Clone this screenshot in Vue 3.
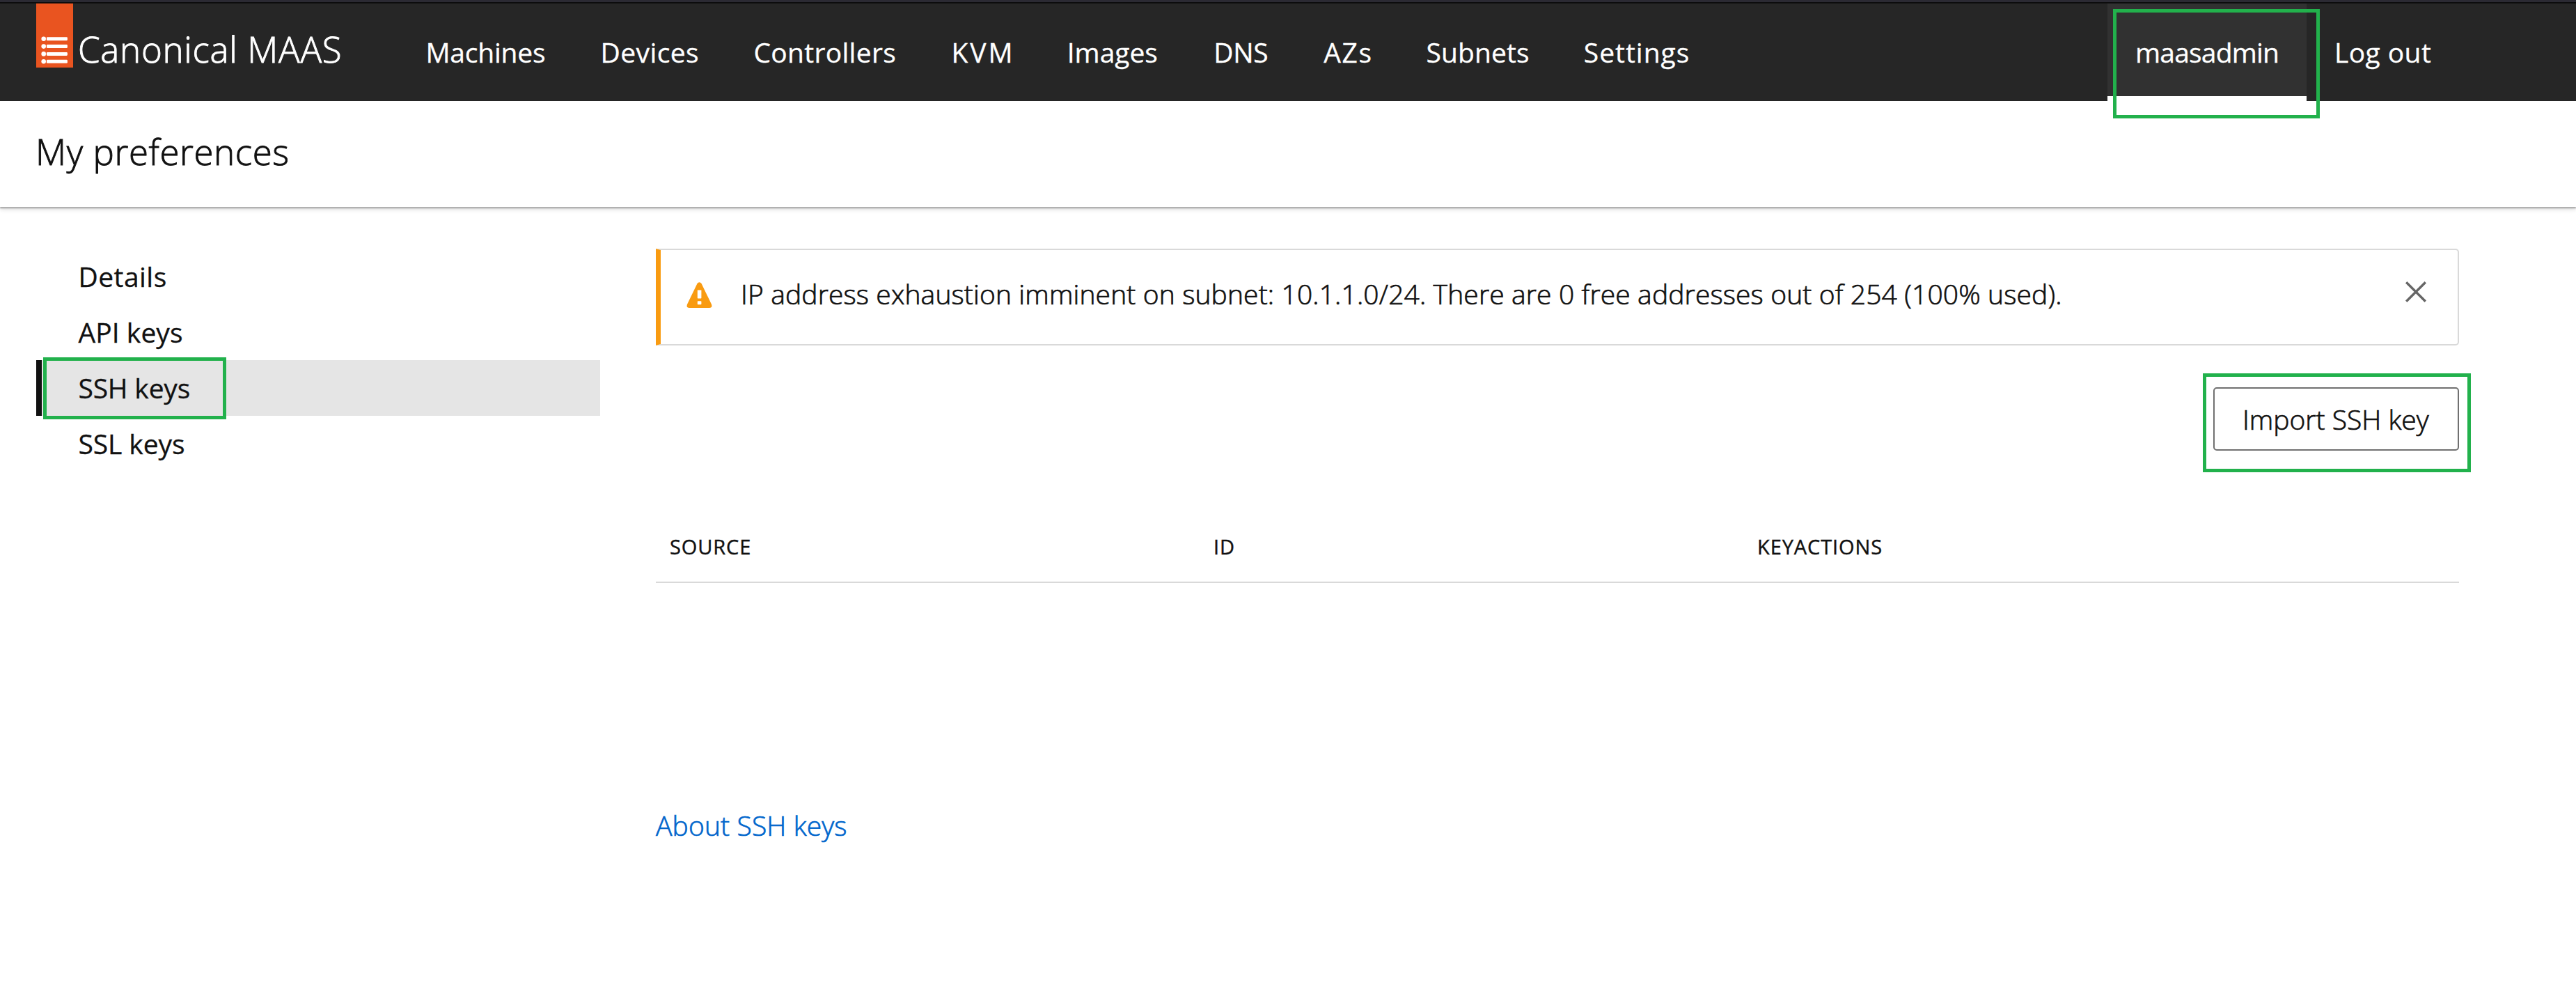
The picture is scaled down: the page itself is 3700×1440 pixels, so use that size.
<script setup>
const navLinks = [
  { label: 'Machines', width: 251.2, spacing: -0.2 },
  { label: 'Devices', width: 219.8, spacing: 0.4 },
  { label: 'Controllers', width: 284.1, spacing: 0.3 },
  { label: 'KVM', width: 166.3, spacing: 3 },
  { label: 'Images', width: 210.5, spacing: -0.05 },
  { label: 'DNS', width: 158, spacing: -0.3 },
  { label: 'AZs', width: 147.2, spacing: 1.6 },
  { label: 'Subnets', width: 226.3, spacing: 0.1 },
  { label: 'Settings', width: 160, spacing: 1 },
]

const sideLinks = [
  { label: 'Details', spacing: 0.45 },
  { label: 'API keys', spacing: 0.05 },
  { label: 'SSH keys', spacing: -0.2, active: true },
  { label: 'SSL keys', spacing: -0.1 },
]

const columns = ['Source', 'ID', 'KeyActions']
</script>

<template>
  <div class="app">
    <div class="chrome-edge"></div>
    <header class="header">
      <a class="brand">
        <svg class="brand-tag" width="53" height="92" viewBox="0 0 53 92">
          <rect width="53" height="92" fill="#e95420" />
          <g fill="#fff">
            <template v-for="n in 4" :key="n">
              <circle cx="10.7" :cy="40 + n * 10.8" r="3.3" />
              <rect x="14.9" :y="37.5 + n * 10.8" width="30" height="5" rx="1.3" />
            </template>
          </g>
        </svg>
        <span class="brand-name">Canonical MAAS</span>
      </a>
      <nav class="nav">
        <a
          v-for="link in navLinks"
          :key="link.label"
          :style="{ width: link.width + 'px', letterSpacing: link.spacing + 'px' }"
        >{{ link.label }}</a>
      </nav>
      <div class="account">
        <a class="user">maasadmin<span class="ring ring-user"></span></a>
        <a class="logout">Log out</a>
      </div>
    </header>

    <section class="title-bar">
      <h1>My preferences</h1>
    </section>

    <div class="body">
      <aside class="side">
        <a
          v-for="link in sideLinks"
          :key="link.label"
          class="side-link"
          :class="{ active: link.active }"
          :style="{ letterSpacing: link.spacing + 'px' }"
        >{{ link.label }}<span v-if="link.active" class="ring ring-side"></span></a>
      </aside>

      <main class="main">
        <div class="notice">
          <svg class="notice-icon" width="37" height="38" viewBox="0 0 37 38">
            <path d="M15.4 2.2Q18.5-1.6 21.6 2.2L36 32Q37.6 36.9 32.8 36.9H4.2Q-.6 36.9 1 32Z" fill="#f99b11" />
            <rect x="15.8" y="11.5" width="5.6" height="12" rx=".8" fill="#fff" />
            <rect x="15.8" y="27.3" width="5.6" height="5" rx=".8" fill="#fff" />
          </svg>
          <p>IP address exhaustion imminent on subnet: 10.1.1.0/24. There are 0 free addresses out of 254 (100% used).</p>
          <svg class="close" width="30" height="30" viewBox="0 0 30 30">
            <path d="M1.2 1.2 28.8 28.8M28.8 1.2 1.2 28.8" stroke="#666" stroke-width="3.4" />
          </svg>
        </div>

        <div class="actions">
          <button class="import">Import SSH key<span class="ring ring-import"></span></button>
        </div>

        <div class="table-head">
          <span v-for="column in columns" :key="column">{{ column }}</span>
        </div>

        <a class="about">About SSH keys</a>
      </main>
    </div>
  </div>
</template>

<style>
body {
  margin: 0;
  background: #fff;
}
</style>

<style scoped>
.app {
  width: 3700px;
  height: 1440px;
  overflow: hidden;
  background: #fff;
  color: #111;
  font-family: 'Open Sans', 'Noto Sans', sans-serif;
  font-size: 39px;
  white-space: nowrap;
  -webkit-text-stroke-width: 0.3px;
}

.chrome-edge {
  height: 3px;
  background: #2b2a33;
  border-bottom: 2px solid #0c0c0d;
}

.header {
  display: flex;
  height: 140px;
  background: #262626;
  color: #fff;
  line-height: 140px;
}

.brand {
  display: flex;
  box-sizing: border-box;
  width: 611.4px;
  padding-left: 52px;
}

.brand-name {
  margin-left: 7px;
  font-size: 51px;
  font-weight: 300;
  line-height: 131px;
  letter-spacing: 0.7px;
  -webkit-text-stroke-width: 0.9px;
}

.nav {
  display: flex;
  width: 2415.6px;
}

.account {
  display: flex;
}

.user {
  position: relative;
  box-sizing: border-box;
  width: 286px;
  padding-left: 40px;
  background: #313131;
  box-shadow: inset 0 -7px #fff;
  letter-spacing: -0.8px;
}

.logout {
  margin-left: 40px;
  letter-spacing: 0.4px;
}

.ring {
  position: absolute;
  box-sizing: border-box;
  border: 5px solid #22b14c;
  pointer-events: none;
}

.ring-user {
  left: 8px;
  top: 8px;
  width: 297px;
  height: 157px;
}

.title-bar {
  box-sizing: border-box;
  height: 152px;
  padding: 42px 0 0 51px;
  box-shadow: 0 2px 2px #a6a6a6, 0 4px 6px rgba(0, 0, 0, 0.12);
}

h1 {
  margin: 0;
  font-size: 51px;
  font-weight: 300;
  line-height: 60px;
  letter-spacing: 0.6px;
  -webkit-text-stroke-width: 0.9px;
}

.body {
  display: flex;
  gap: 80px;
  padding: 60px 168px 0 52px;
}

.side {
  width: 810px;
}

.side-link {
  position: relative;
  display: block;
  height: 80px;
  padding-left: 60.5px;
  line-height: 79px;
}

.side-link.active {
  background: #e5e5e5;
  box-shadow: inset 8px 0 #111;
}

.ring-side {
  left: 10px;
  top: -4px;
  width: 263px;
  height: 89px;
}

.main {
  flex: 1;
  font-weight: 300;
  -webkit-text-stroke-width: 0.7px;
}

.notice {
  display: flex;
  box-sizing: border-box;
  height: 139px;
  border: 2px solid #d9d9d9;
  border-left: 7px solid #f99b11;
  border-radius: 0 5px 5px 0;
}

.notice-icon {
  margin: 46px 0 0 36.5px;
}

.notice p {
  width: 2390px;
  margin: 33px 0 0 41.5px;
  line-height: 60px;
  letter-spacing: 0.13px;
}

.close {
  margin: 45px 45px 0 auto;
}

.actions {
  display: flex;
  justify-content: flex-end;
  padding-top: 60px;
}

.import {
  position: relative;
  box-sizing: border-box;
  width: 353px;
  height: 91px;
  padding: 0 0 0 40px;
  border: 2px solid #707070;
  border-radius: 5px;
  background: #fff;
  color: #111;
  font: inherit;
  line-height: 86px;
  text-align: left;
}

.ring-import {
  left: -17px;
  top: -22px;
  width: 385px;
  height: 142px;
}

.table-head {
  display: grid;
  grid-template-columns: 781px 781px 1fr;
  height: 100px;
  margin-top: 88px;
  padding-left: 20px;
  border-bottom: 2px solid #d9d9d9;
  font-size: 29px;
  font-weight: 400;
  line-height: 100px;
  letter-spacing: 0.9px;
  text-transform: uppercase;
  -webkit-text-stroke-width: 0.4px;
}

.about {
  display: block;
  margin-top: 318px;
  color: #06c;
  line-height: 60px;
  letter-spacing: 0.13px;
}
</style>
